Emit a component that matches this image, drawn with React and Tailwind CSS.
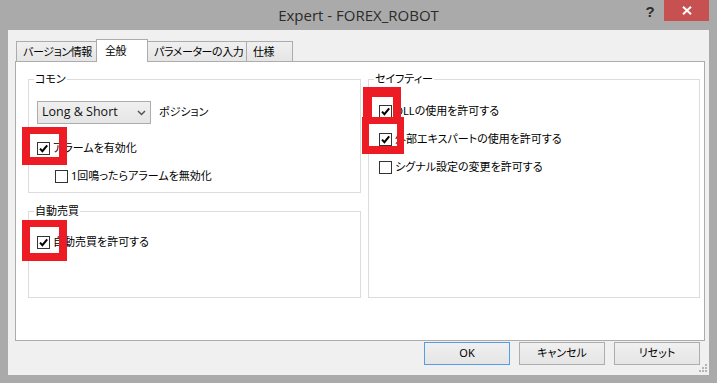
import React from "react";

const font = "font-['Noto_Sans','Noto_Sans_CJK_JP',sans-serif] [font-feature-settings:'palt']";

const Check = ({ checked }) => (
  <span className="w-[13px] h-[13px] border border-[#333333] bg-white flex items-center justify-center shrink-0">
    {checked && (
      <svg width="9" height="9" viewBox="0 0 9 9">
        <path d="M1 4.6 L3.4 7.2 L8.2 1.4" stroke="#000" strokeWidth="2" fill="none" />
      </svg>
    )}
  </span>
);

const CheckRow = ({ checked, label, indent = "" }) => (
  <div className={`flex items-center h-[20px] ${indent}`}>
    <Check checked={checked} />
    <span className="ml-[3px] text-[11px] leading-[16px] text-black whitespace-nowrap">{label}</span>
  </div>
);

const Group = ({ title, className, children }) => (
  <div className={`relative border border-[#dcdcdc] ${className}`}>
    <span className="absolute left-[5px] -top-[9px] px-[1px] bg-white text-[11px] leading-[16px] text-black whitespace-nowrap">
      {title}
    </span>
    {children}
  </div>
);

const tabs = [
  { label: "バージョン情報", w: "w-[81px]" },
  { label: "全般", w: "w-[52px]", active: true },
  { label: "パラメーターの入力", w: "w-[100px]" },
  { label: "仕様", w: "w-[47px]" },
];

const Button = ({ label, primary }) => (
  <button
    className={`w-[86px] h-[23px] border bg-gradient-to-b from-[#f0f0f0] to-[#e5e5e5] text-[11px] text-black flex items-center justify-center ${
      primary ? "border-[#569de5]" : "border-[#adadad]"
    }`}
  >
    {label}
  </button>
);

export default function App() {
  return (
    <div className={`w-[717px] h-[383px] bg-[#aaaaaa] relative overflow-hidden ${font}`}>
      {/* title bar */}
      <div className="h-[30px] flex items-center justify-center">
        <span className="text-[15px] leading-[30px] text-[#2b2b2b] font-['Open_Sans','Noto_Sans',sans-serif]">
          Expert - FOREX_ROBOT
        </span>
      </div>
      <span className="absolute left-[643px] top-[2px] w-[14px] text-center text-[15px] font-bold leading-[20px] text-[#2d2d2d] font-['Liberation_Sans',sans-serif]">
        ?
      </span>
      <div className="absolute right-[8px] top-0 w-[45px] h-[21px] bg-[#c75050] flex items-center justify-center">
        <svg width="10" height="9" viewBox="0 0 10 9">
          <path d="M1 0.8 L9 8.2 M9 0.8 L1 8.2" stroke="#fff" strokeWidth="2" />
        </svg>
      </div>

      {/* client area */}
      <div className="relative mx-[8px] h-[345px] bg-[#f0f0f0] pl-[7px] pr-[4px] pt-[9px]">
        <div className="flex items-end h-[22px] pl-[1px]">
          {tabs.map((t, i) => (
            <div
              key={t.label}
              className={`${t.w} ${i > 0 ? "-ml-px" : ""} border-l border-t border-r border-[#acacac] flex text-[11px] leading-[16px] tracking-[-0.4px] text-black whitespace-nowrap ${
                t.active
                  ? "relative z-10 h-[23px] -mb-px bg-white pl-[8px] pt-[3px] items-start"
                  : "h-[20px] bg-gradient-to-b from-[#f0f0f0] to-[#e5e5e5] pl-[6px] items-center"
              }`}
            >
              {t.label}
            </div>
          ))}
        </div>

        <div className="h-[280px] border border-[#acacac] bg-white pl-[12px] pt-[17px] flex gap-[7px]">
          <div className="flex flex-col gap-[18px]">
            <Group title="コモン" className="w-[333px] h-[114px] pl-[8px] pt-[21px]">
              <div className="flex items-center h-[23px]">
                <div className="w-[114px] h-[23px] border border-[#acacac] bg-gradient-to-b from-[#f0f0f0] to-[#e5e5e5] flex items-center pl-[4px] pr-[4px]">
                  <span className="flex-1 text-[12.5px] text-[#111] font-['Open_Sans',sans-serif]">Long &amp; Short</span>
                  <svg width="9" height="6" viewBox="0 0 9 6">
                    <path d="M1 1 L4.5 4.5 L8 1" stroke="#555" strokeWidth="1.5" fill="none" />
                  </svg>
                </div>
                <span className="ml-[8px] text-[11px] text-black">ポジション</span>
              </div>
              <div className="mt-[14px] flex flex-col gap-[8px]">
                <CheckRow checked label="アラームを有効化" />
                <CheckRow label="1回鳴ったらアラームを無効化" indent="ml-[18px]" />
              </div>
            </Group>
            <Group title="自動売買" className="w-[333px] h-[87px] pl-[8px] pt-[20px]">
              <CheckRow checked label="自動売買を許可する" />
            </Group>
          </div>
          <Group title="セイフティー" className="w-[332px] h-[219px] pl-[10px] pt-[21px]">
            <div className="flex flex-col gap-[8px]">
              <CheckRow checked label="DLLの使用を許可する" />
              <CheckRow checked label="外部エキスパートの使用を許可する" />
              <CheckRow label="シグナル設定の変更を許可する" />
            </div>
          </Group>
        </div>

        <div className="mt-[1px] flex justify-end gap-[9px] pr-[5px]">
          <Button label="OK" primary />
          <Button label="キャンセル" />
          <Button label="リセット" />
        </div>

        <svg className="absolute right-[2px] bottom-[3px]" width="8" height="8" viewBox="0 0 8 8">
          <g fill="#b4b4b4">
            <rect x="6" y="0" width="2" height="2" />
            <rect x="3" y="3" width="2" height="2" />
            <rect x="6" y="3" width="2" height="2" />
            <rect x="0" y="6" width="2" height="2" />
            <rect x="3" y="6" width="2" height="2" />
            <rect x="6" y="6" width="2" height="2" />
          </g>
        </svg>
      </div>

      {/* red highlight boxes */}
      <div className="absolute left-[22px] top-[127px] w-[45px] h-[38px] border-[#ed1c24] border-x-[8px] border-t-[7px] border-b-[8px]" />
      <div className="absolute left-[22px] top-[220px] w-[45px] h-[41px] border-[#ed1c24] border-x-[8px] border-t-[7px] border-b-[8px]" />
      <div className="absolute left-[363px] top-[87px] w-[38px] h-[37px] border-[#ed1c24] border-l-[9px] border-r-[8px] border-t-[10px] border-b-[7px]" />
      <div className="absolute left-[362px] top-[117px] w-[42px] h-[37px] border-[#ed1c24] border-x-[7px] border-t-[7px] border-b-[8px]" />
    </div>
  );
}
